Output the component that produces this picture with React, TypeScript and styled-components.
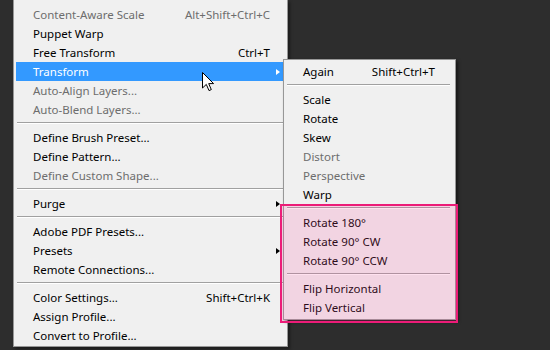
import React from "react";
import styled, { createGlobalStyle } from "styled-components";

const Global = createGlobalStyle`
  html, body {
    margin: 0;
    padding: 0;
    background: #2d2d2d;
  }
  * {
    box-sizing: border-box;
  }
`;

const Stage = styled.div`
  position: relative;
  width: 550px;
  height: 350px;
  overflow: hidden;
  background: #2d2d2d;
  display: flex;
  align-items: flex-start;
  font-family: "Noto Sans", "Open Sans", sans-serif;
  font-size: 11.5px;
`;

const Menu = styled.div`
  margin-left: 13px;
  width: 275px;
  background: #f0f0f0;
  border: 1px solid #979797;
  border-top: none;
  padding: 5px 4px 1px 2px;
  box-shadow: 2px 2px 3px rgba(0, 0, 0, 0.4);
`;

const SubMenu = styled.div`
  position: absolute;
  left: 283px;
  top: 59px;
  width: 173px;
  background: #f0f0f0;
  border: 1px solid #979797;
  padding: 2px 5px 2px 3px;
  box-shadow: 2px 2px 3px rgba(0, 0, 0, 0.5);
  z-index: 2;
`;

const Row = styled.div<{ $active?: boolean; $disabled?: boolean; $sub?: boolean }>`
  display: flex;
  align-items: center;
  height: 19px;
  line-height: 19px;
  padding-left: ${(p) => (p.$sub ? 16 : 17)}px;
  padding-right: ${(p) => (p.$sub ? 15 : 3)}px;
  background: ${(p) => (p.$active ? "#3399ff" : "transparent")};
  color: ${(p) => (p.$active ? "#ffffff" : p.$disabled ? "#6d6d6d" : "#000000")};
  white-space: nowrap;
`;

const Label = styled.span`
  flex: 1;
`;

const Shortcut = styled.span``;

const ArrowSlot = styled.span`
  width: 10px;
  display: flex;
  justify-content: flex-end;
`;

const Arrow = styled.span<{ $light?: boolean }>`
  width: 0;
  height: 0;
  border-top: 3.5px solid transparent;
  border-bottom: 3.5px solid transparent;
  border-left: 4px solid ${(p) => (p.$light ? "#ffffff" : "#000000")};
`;

const Sep = styled.div<{ $sub?: boolean }>`
  margin: 3px 0 4px ${(p) => (p.$sub ? 0 : 1)}px;
  height: 2px;
  border-top: 1px solid #a0a0a0;
  border-bottom: 1px solid #ffffff;
`;

const Highlight = styled.div`
  position: absolute;
  left: 280px;
  top: 204px;
  width: 178px;
  height: 119px;
  border: 2px solid #ec1c78;
  background: rgba(255, 80, 160, 0.17);
  z-index: 3;
`;

const Pointer = styled.svg`
  position: absolute;
  left: 202px;
  top: 72px;
  z-index: 4;
`;

type Item = {
  label?: string;
  shortcut?: string;
  disabled?: boolean;
  active?: boolean;
  sub?: boolean;
  sep?: boolean;
};

const mainItems: Item[] = [
  { label: "Content-Aware Scale", shortcut: "Alt+Shift+Ctrl+C", disabled: true },
  { label: "Puppet Warp" },
  { label: "Free Transform", shortcut: "Ctrl+T" },
  { label: "Transform", active: true, sub: true },
  { label: "Auto-Align Layers...", disabled: true },
  { label: "Auto-Blend Layers...", disabled: true },
  { sep: true },
  { label: "Define Brush Preset..." },
  { label: "Define Pattern..." },
  { label: "Define Custom Shape...", disabled: true },
  { sep: true },
  { label: "Purge", sub: true },
  { sep: true },
  { label: "Adobe PDF Presets..." },
  { label: "Presets", sub: true },
  { label: "Remote Connections..." },
  { sep: true },
  { label: "Color Settings...", shortcut: "Shift+Ctrl+K" },
  { label: "Assign Profile..." },
  { label: "Convert to Profile..." },
];

const transformItems: Item[] = [
  { label: "Again", shortcut: "Shift+Ctrl+T" },
  { sep: true },
  { label: "Scale" },
  { label: "Rotate" },
  { label: "Skew" },
  { label: "Distort", disabled: true },
  { label: "Perspective", disabled: true },
  { label: "Warp" },
  { sep: true },
  { label: "Rotate 180°" },
  { label: "Rotate 90° CW" },
  { label: "Rotate 90° CCW" },
  { sep: true },
  { label: "Flip Horizontal" },
  { label: "Flip Vertical" },
];

const App = () => {
  return (
    <Stage>
      <Global />
      <Menu>
        {mainItems.map((it, i) =>
          it.sep ? (
            <Sep key={i} />
          ) : (
            <Row key={i} $active={it.active} $disabled={it.disabled}>
              <Label>{it.label}</Label>
              {it.shortcut && <Shortcut>{it.shortcut}</Shortcut>}
              <ArrowSlot>{it.sub && <Arrow $light={it.active} />}</ArrowSlot>
            </Row>
          )
        )}
      </Menu>

      <SubMenu>
        {transformItems.map((it, i) =>
          it.sep ? (
            <Sep key={i} $sub />
          ) : (
            <Row key={i} $sub $disabled={it.disabled}>
              <Label>{it.label}</Label>
              {it.shortcut && <Shortcut>{it.shortcut}</Shortcut>}
            </Row>
          )
        )}
      </SubMenu>

      <Highlight />

      <Pointer width="13" height="20" viewBox="0 0 13 20">
        <path
          d="M0.5 0.5 L0.5 16 L4.3 12.4 L7 18.6 L9.3 17.6 L6.7 11.6 L11.6 11.6 Z"
          fill="#ffffff"
          stroke="#000000"
          strokeWidth="1"
          strokeLinejoin="round"
        />
      </Pointer>
    </Stage>
  );
};

export default App;
